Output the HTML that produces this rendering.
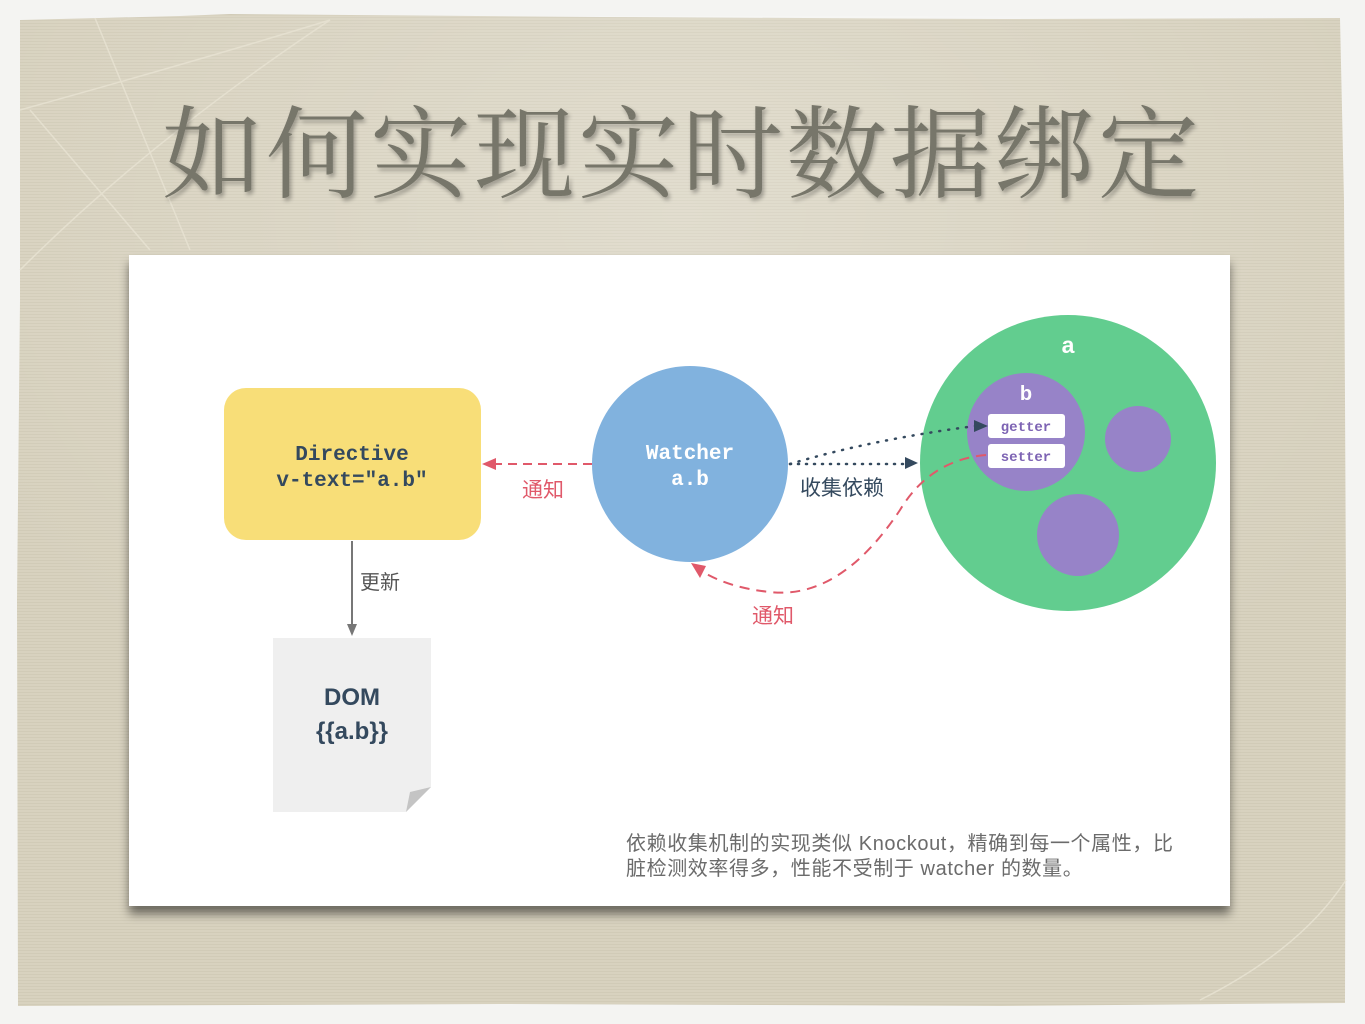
<!DOCTYPE html>
<html><head><meta charset="utf-8"><style>
html,body{margin:0;padding:0;background:#f4f4f2;width:1365px;height:1024px;overflow:hidden}
</style></head><body>
<svg width="1365" height="1024" viewBox="0 0 1365 1024" xmlns="http://www.w3.org/2000/svg">
<defs>
<pattern id="lines" width="4" height="3" patternUnits="userSpaceOnUse"><rect width="4" height="3" fill="#d8d2bf"/><rect y="2" width="4" height="1" fill="#d1cbb7"/></pattern>
<filter id="sh" x="-5%" y="-5%" width="110%" height="115%"><feGaussianBlur in="SourceAlpha" stdDeviation="5"/><feOffset dx="0" dy="8"/><feComponentTransfer><feFuncA type="linear" slope="0.5"/></feComponentTransfer><feMerge><feMergeNode/><feMergeNode in="SourceGraphic"/></feMerge></filter>
<filter id="tsh"><feGaussianBlur in="SourceAlpha" stdDeviation="2"/><feOffset dx="2" dy="3"/><feComponentTransfer><feFuncA type="linear" slope="0.3"/></feComponentTransfer><feMerge><feMergeNode/><feMergeNode in="SourceGraphic"/></feMerge></filter>
<radialGradient id="glow" cx="0.5" cy="0.2" r="0.6"><stop offset="0" stop-color="#fff" stop-opacity="0.25"/><stop offset="1" stop-color="#fff" stop-opacity="0"/></radialGradient>
</defs>
<path d="M20 20 L180 16 L230 14 L600 17 L1000 19 L1340 18 L1344 200 L1346 600 L1345 1003 L1000 1006 L500 1004 L18 1006 L17 600 L20 300 Z" fill="url(#lines)"/>
<rect x="18" y="16" width="1328" height="990" fill="url(#glow)"/>
<g stroke="#e8e3d3" stroke-width="1.5" fill="none" opacity="0.8">
<path d="M95 18 L190 250"/><path d="M20 110 Q200 60 330 20"/><path d="M20 270 Q150 140 330 20"/><path d="M30 110 L150 250"/><path d="M1200 1000 Q1300 950 1346 880"/>
</g>
<text x="682" y="190" text-anchor="middle" font-family="'Noto Serif CJK SC','Liberation Serif',serif" font-size="101" fill="#77766a" letter-spacing="3" filter="url(#tsh)">如何实现实时数据绑定</text>
<rect x="129" y="255" width="1101" height="651" fill="#fff" filter="url(#sh)"/>
<rect x="224" y="388" width="257" height="152" rx="22" fill="#f8de78"/>
<g font-family="'Liberation Mono','DejaVu Sans Mono',monospace" font-weight="bold" font-size="21" fill="#34495e" text-anchor="middle">
<text x="352" y="460">Directive</text>
<text x="352" y="486">v-text="a.b"</text>
</g>
<line x1="352" y1="541" x2="352" y2="626" stroke="#777" stroke-width="2"/>
<path d="M347 624 L357 624 L352 636 Z" fill="#777"/>
<text x="360" y="589" font-family="'Liberation Sans','Noto Sans CJK SC',sans-serif" font-size="20" fill="#555">更新</text>
<path d="M273 638 L431 638 L431 787 L406 812 L273 812 Z" fill="#efefef"/>
<path d="M431 787 L406 812 L410 792 Z" fill="#c4c4c4"/>
<g font-family="'Liberation Sans','DejaVu Sans',sans-serif" font-weight="bold" font-size="24" fill="#34495e" text-anchor="middle">
<text x="352" y="705">DOM</text>
<text x="352" y="739">{{a.b}}</text>
</g>
<circle cx="690" cy="464" r="98" fill="#81b2de"/>
<g font-family="'Liberation Mono','DejaVu Sans Mono',monospace" font-weight="bold" font-size="21" fill="#fff" text-anchor="middle">
<text x="690" y="459">Watcher</text>
<text x="690" y="485">a.b</text>
</g>
<line x1="592" y1="464" x2="494" y2="464" stroke="#e0596a" stroke-width="2" stroke-dasharray="9,6"/>
<path d="M482 464 L496 458 L496 470 Z" fill="#e0596a"/>
<text x="522" y="497" font-family="'Liberation Sans','Noto Sans CJK SC',sans-serif" font-size="21" fill="#e0596a">通知</text>
<circle cx="1068" cy="463" r="148" fill="#62cd8f"/>
<text x="1068" y="353" text-anchor="middle" font-family="'Liberation Sans',sans-serif" font-weight="bold" font-size="23" fill="#fff">a</text>
<circle cx="1026" cy="432" r="59" fill="#9783c8"/>
<circle cx="1138" cy="439" r="33" fill="#9783c8"/>
<circle cx="1078" cy="535" r="41" fill="#9783c8"/>
<text x="1026" y="400" text-anchor="middle" font-family="'Liberation Sans',sans-serif" font-weight="bold" font-size="20" fill="#fff">b</text>
<rect x="988" y="414" width="77" height="24" rx="3" fill="#fff"/>
<rect x="988" y="444" width="77" height="24" rx="3" fill="#fff"/>
<g font-family="'Liberation Mono','DejaVu Sans Mono',monospace" font-weight="bold" font-size="14" fill="#7d63b3" text-anchor="middle">
<text x="1026" y="431">getter</text>
<text x="1026" y="461">setter</text>
</g>
<path d="M790 464 L906 464" stroke="#34495e" stroke-width="2.5" stroke-dasharray="1,7" stroke-linecap="round" fill="none"/>
<path d="M918 463 L905 457 L905 469 Z" fill="#34495e"/>
<path d="M790 464 Q870 440 975 426" stroke="#34495e" stroke-width="2.5" stroke-dasharray="1,8" stroke-linecap="round" fill="none"/>
<path d="M988 426 L974 420 L974 432 Z" fill="#34495e"/>
<text x="800" y="495" font-family="'Liberation Sans','Noto Sans CJK SC',sans-serif" font-size="21" fill="#34495e">收集依赖</text>
<path d="M986 455 Q930 460 900 510 Q840 600 770 592 Q730 588 703 572" stroke="#e0596a" stroke-width="2" stroke-dasharray="10,7" fill="none"/>
<path d="M691 563 L706 566 L700 578 Z" fill="#e0596a"/>
<text x="752" y="623" font-family="'Liberation Sans','Noto Sans CJK SC',sans-serif" font-size="21" fill="#e0596a">通知</text>
<g font-family="'Liberation Sans','Noto Sans CJK SC',sans-serif" font-size="20" fill="#6b6b6b" letter-spacing="0.6">
<text x="626" y="850">依赖收集机制的实现类似 Knockout，精确到每一个属性，比</text>
<text x="626" y="875">脏检测效率得多，性能不受制于 watcher 的数量。</text>
</g>
</svg>
</body></html>
